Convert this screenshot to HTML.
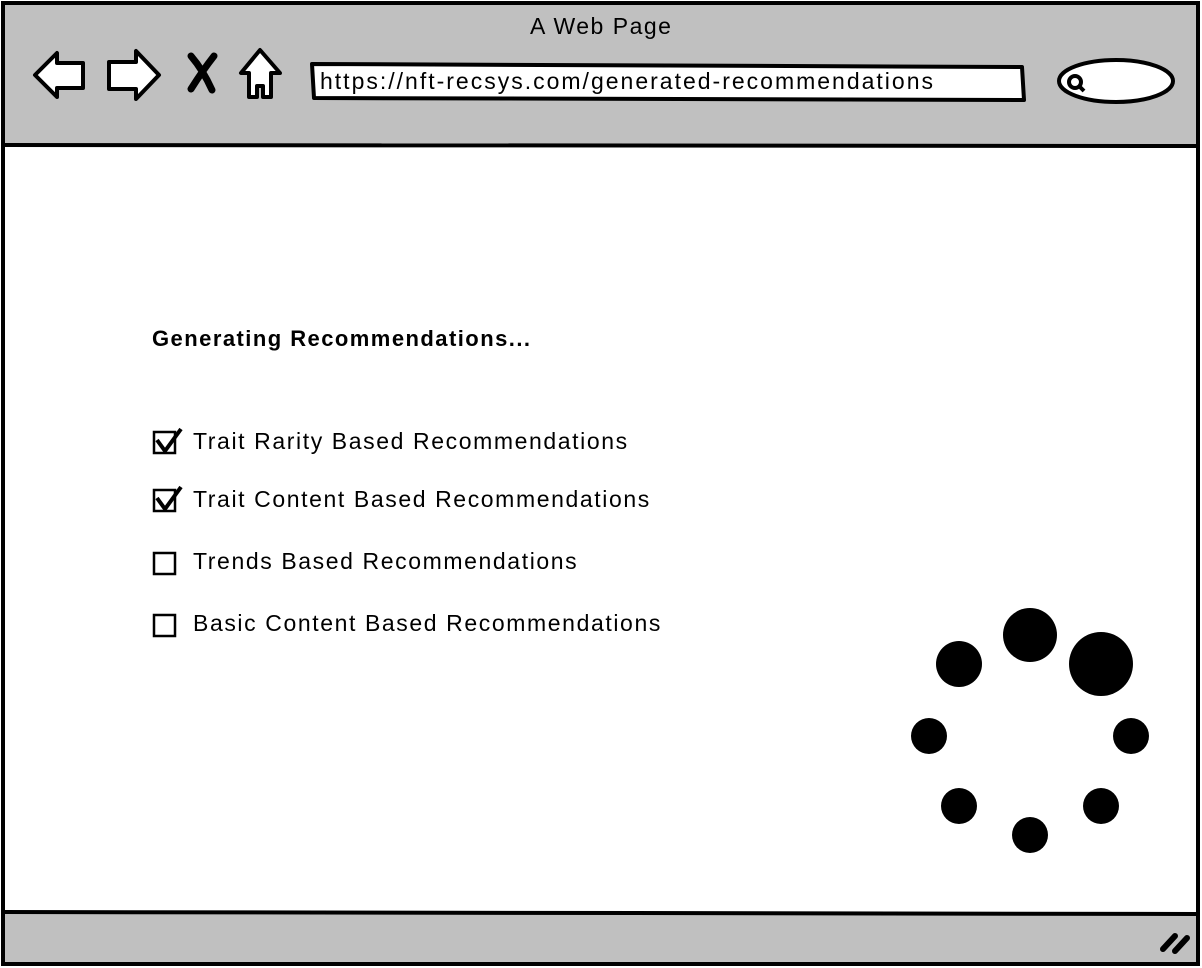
<!DOCTYPE html>
<html><head><meta charset="utf-8"><style>
body{margin:0;width:1202px;height:968px;background:#fff;overflow:hidden;font-family:"Liberation Sans",sans-serif;color:#000}
.t{position:absolute;white-space:nowrap}
.i{font-size:23px;letter-spacing:1.6px}
</style></head><body>
<svg width="1202" height="968" style="position:absolute;left:0;top:0">
<rect x="4" y="4" width="1193" height="141" fill="#c0c0c0"/>
<rect x="4" y="912" width="1193" height="52" fill="#c0c0c0"/>
<rect x="3" y="3" width="1195" height="961" fill="none" stroke="#000" stroke-width="4"/>
<path d="M4 145 L1197 146" stroke="#000" stroke-width="4"/>
<path d="M4 912 L1197 914" stroke="#000" stroke-width="4"/>
<path d="M35 75 L57 53 L57 63 L83 63 L83 88 L57 88 L57 97 Z" fill="#fff" stroke="#000" stroke-width="4" stroke-linejoin="round"/>
<path d="M159 75 L136 51 L136 62 L109 62 L109 89 L136 89 L136 99 Z" fill="#fff" stroke="#000" stroke-width="4" stroke-linejoin="round"/>
<path d="M191 56 Q203 70 212 90 M214 56 Q203 70 191 89" stroke="#000" stroke-width="7" stroke-linecap="round" fill="none"/>
<path d="M260 50 L241 73 L249 73 L249 97 L257 97 L257 86 L263 86 L263 97 L271 97 L271 73 L280 73 Z" fill="#fff" stroke="#000" stroke-width="4" stroke-linejoin="round"/>
<path d="M312 64 L1022 67 L1024 100 L314 98 Z" fill="#fff" stroke="#000" stroke-width="4" stroke-linejoin="round"/>
<ellipse cx="1116" cy="81" rx="57" ry="21" fill="#fff" stroke="#000" stroke-width="4"/>
<circle cx="1075" cy="82" r="6" fill="none" stroke="#000" stroke-width="4"/>
<path d="M1079 86 L1084 91" stroke="#000" stroke-width="4"/>
<g fill="none" stroke="#000" stroke-width="2.5">
<rect x="154" y="432" width="21" height="21"/>
<rect x="154" y="490" width="21" height="21"/>
<rect x="154" y="553" width="21" height="21"/>
<rect x="154" y="615" width="21" height="21"/>
</g>
<g fill="none" stroke="#000" stroke-width="4" stroke-linejoin="round">
<path d="M157 440 L165 451 L181 429"/>
<path d="M157 498 L165 509 L181 487"/>
</g>
<g fill="#000">
<circle cx="1030" cy="635" r="27"/><circle cx="1101" cy="664" r="32"/>
<circle cx="959" cy="664" r="23"/><circle cx="929" cy="736" r="18"/>
<circle cx="1131" cy="736" r="18"/><circle cx="959" cy="806" r="18"/>
<circle cx="1101" cy="806" r="18"/><circle cx="1030" cy="835" r="18"/>
</g>
<path d="M1163 949 L1175 936 M1175 951 L1187 938" stroke="#000" stroke-width="6" stroke-linecap="round"/>
</svg>
<div class="t" style="left:530px;top:13px;font-size:23px;letter-spacing:1.5px">A Web Page</div>
<div class="t" style="left:320px;top:68px;font-size:23px;letter-spacing:2px">https://nft-recsys.com/generated-recommendations</div>
<div class="t" style="left:152px;top:326px;font-size:22px;font-weight:bold;letter-spacing:1.45px">Generating Recommendations...</div>
<div class="t i" style="left:193px;top:428px">Trait Rarity Based Recommendations</div>
<div class="t i" style="left:193px;top:486px">Trait Content Based Recommendations</div>
<div class="t i" style="left:193px;top:548px">Trends Based Recommendations</div>
<div class="t i" style="left:193px;top:610px">Basic Content Based Recommendations</div>
</body></html>
